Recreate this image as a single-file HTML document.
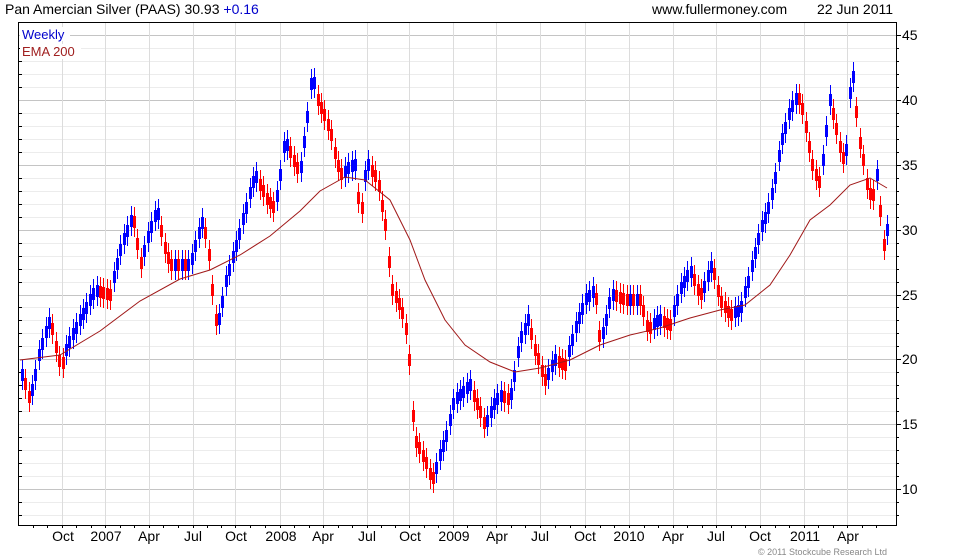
<!DOCTYPE html>
<html><head><meta charset="utf-8">
<style>
html,body{margin:0;padding:0;background:#fff;}
svg{display:block;font-family:"Liberation Sans",sans-serif;}
</style></head>
<body>
<svg width="980" height="560" xmlns="http://www.w3.org/2000/svg">
<rect width="980" height="560" fill="#fff"/>
<g stroke="#ececec" stroke-width="1">
<path d="M19 48.5H896M19 61.5H896M19 74.5H896M19 87.5H896M19 113.5H896M19 126.5H896M19 139.5H896M19 152.5H896M19 178.5H896M19 191.5H896M19 204.5H896M19 217.5H896M19 243.5H896M19 256.5H896M19 269.5H896M19 282.5H896M19 307.5H896M19 320.5H896M19 333.5H896M19 346.5H896M19 372.5H896M19 385.5H896M19 398.5H896M19 411.5H896M19 437.5H896M19 450.5H896M19 463.5H896M19 476.5H896M19 502.5H896M19 515.5H896"/>
</g>
<g stroke="#c4c4c4" stroke-width="1">
<path d="M19 35.5H896M19 100.5H896M19 165.5H896M19 230.5H896M19 295.5H896M19 359.5H896M19 424.5H896M19 489.5H896"/>
</g>
<g stroke="#dcdcdc" stroke-width="1">
<path d="M62.5 23V525M105.5 23V525M149.5 23V525M193.5 23V525M235.5 23V525M280.5 23V525M323.5 23V525M367.5 23V525M409.5 23V525M453.5 23V525M496.5 23V525M540.5 23V525M585.5 23V525M629.5 23V525M673.5 23V525M716.5 23V525M760.5 23V525M804.5 23V525M847.5 23V525"/>
</g>
<g stroke="#000" stroke-width="1">
<path d="M896 35.5h5M896 100.5h5M896 165.5h5M896 230.5h5M896 295.5h5M896 359.5h5M896 424.5h5M896 489.5h5M896 48.5h3M896 61.5h3M896 74.5h3M896 87.5h3M896 113.5h3M896 126.5h3M896 139.5h3M896 152.5h3M896 178.5h3M896 191.5h3M896 204.5h3M896 217.5h3M896 243.5h3M896 256.5h3M896 269.5h3M896 282.5h3M896 307.5h3M896 320.5h3M896 333.5h3M896 346.5h3M896 372.5h3M896 385.5h3M896 398.5h3M896 411.5h3M896 437.5h3M896 450.5h3M896 463.5h3M896 476.5h3M896 502.5h3M896 515.5h3"/>
<path d="M19 48.5h3M19 61.5h3M19 74.5h3M19 87.5h3M19 113.5h3M19 126.5h3M19 139.5h3M19 152.5h3M19 178.5h3M19 191.5h3M19 204.5h3M19 217.5h3M19 243.5h3M19 256.5h3M19 269.5h3M19 282.5h3M19 307.5h3M19 320.5h3M19 333.5h3M19 346.5h3M19 372.5h3M19 385.5h3M19 398.5h3M19 411.5h3M19 437.5h3M19 450.5h3M19 463.5h3M19 476.5h3M19 502.5h3M19 515.5h3"/>
<path d="M33.5 525v3M47.5 525v3M62.5 525v3M76.5 525v3M91.5 525v3M105.5 525v3M120.5 525v3M134.5 525v3M149.5 525v3M163.5 525v3M178.5 525v3M193.5 525v3M207.5 525v3M221.5 525v3M235.5 525v3M250.5 525v3M265.5 525v3M280.5 525v3M294.5 525v3M309.5 525v3M323.5 525v3M338.5 525v3M352.5 525v3M367.5 525v3M381.5 525v3M395.5 525v3M409.5 525v3M424.5 525v3M438.5 525v3M453.5 525v3M467.5 525v3M482.5 525v3M496.5 525v3M511.5 525v3M525.5 525v3M540.5 525v3M555.5 525v3M570.5 525v3M585.5 525v3M600.5 525v3M614.5 525v3M629.5 525v3M644.5 525v3M658.5 525v3M673.5 525v3M687.5 525v3M702.5 525v3M716.5 525v3M731.5 525v3M745.5 525v3M760.5 525v3M775.5 525v3M789.5 525v3M804.5 525v3M818.5 525v3M833.5 525v3M847.5 525v3M862.5 525v3M876.5 525v3"/>
</g>

<g stroke="#0000ff" fill="none">
<path stroke-width="1" transform="translate(0,-9)" d="M22.5 369v30M32.5 384v30M35.5 369v30M39.5 349v30M42.5 338v30M46.5 326v30M49.5 317v30M66.5 344v30M69.5 336v30M73.5 328v30M76.5 322v30M80.5 314v30M83.5 308v30M86.5 302v30M90.5 294v30M93.5 288v30M97.5 285v30M114.5 271v30M117.5 258v30M120.5 244v30M124.5 233v30M127.5 225v30M131.5 215v30M144.5 245v30M148.5 231v30M151.5 221v30M155.5 210v30M158.5 208v30M175.5 259v30M182.5 259v30M188.5 259v30M192.5 253v30M195.5 240v30M199.5 227v30M202.5 217v30M219.5 313v30M222.5 296v30M226.5 275v30M229.5 264v30M233.5 251v30M236.5 240v30M239.5 228v30M243.5 213v30M246.5 202v30M250.5 187v30M253.5 176v30M256.5 171v30M277.5 190v30M280.5 169v30M284.5 141v30M287.5 139v30M301.5 161v30M304.5 136v30M307.5 111v30M311.5 78v30M314.5 77v30M345.5 166v30M348.5 162v30M352.5 160v30M355.5 159v30M365.5 170v30M368.5 159v30M436.5 462v30M440.5 449v30M443.5 440v30M446.5 430v30M450.5 414v30M453.5 398v30M457.5 392v30M460.5 389v30M463.5 386v30M467.5 382v30M470.5 379v30M487.5 415v30M491.5 406v30M494.5 398v30M497.5 393v30M501.5 390v30M511.5 388v30M514.5 370v30M518.5 346v30M521.5 331v30M525.5 323v30M528.5 314v30M548.5 368v30M552.5 360v30M555.5 354v30M569.5 345v30M572.5 334v30M576.5 321v30M579.5 312v30M582.5 303v30M586.5 293v30M589.5 290v30M593.5 286v30M603.5 327v30M606.5 314v30M609.5 297v30M613.5 289v30M630.5 294v30M637.5 294v30M654.5 318v30M657.5 315v30M660.5 314v30M674.5 305v30M677.5 294v30M681.5 282v30M684.5 276v30M687.5 270v30M691.5 266v30M704.5 281v30M708.5 270v30M711.5 261v30M735.5 306v30M738.5 305v30M741.5 301v30M745.5 286v30M748.5 276v30M752.5 260v30M755.5 247v30M758.5 233v30M762.5 220v30M765.5 212v30M768.5 202v30M772.5 188v30M775.5 172v30M779.5 150v30M782.5 133v30M785.5 122v30M789.5 108v30M792.5 100v30M796.5 93v30M823.5 154v30M826.5 125v30M830.5 94v30M846.5 144v30M850.5 87v30M853.5 71v30M877.5 169v30M887.5 224v30"/>
<path stroke-width="3" d="M22.5 369v12M32.5 384v12M35.5 369v12M39.5 349v12M42.5 338v12M46.5 326v12M49.5 317v12M66.5 344v12M69.5 336v12M73.5 328v12M76.5 322v12M80.5 314v12M83.5 308v12M86.5 302v12M90.5 294v12M93.5 288v12M97.5 285v12M114.5 271v12M117.5 258v12M120.5 244v12M124.5 233v12M127.5 225v12M131.5 215v12M144.5 245v12M148.5 231v12M151.5 221v12M155.5 210v12M158.5 208v12M175.5 259v12M182.5 259v12M188.5 259v12M192.5 253v12M195.5 240v12M199.5 227v12M202.5 217v12M219.5 313v12M222.5 296v12M226.5 275v12M229.5 264v12M233.5 251v12M236.5 240v12M239.5 228v12M243.5 213v12M246.5 202v12M250.5 187v12M253.5 176v12M256.5 171v12M277.5 190v12M280.5 169v12M284.5 141v12M287.5 139v12M301.5 161v12M304.5 136v12M307.5 111v12M311.5 78v12M314.5 77v12M345.5 166v12M348.5 162v12M352.5 160v12M355.5 159v12M365.5 170v12M368.5 159v12M436.5 462v12M440.5 449v12M443.5 440v12M446.5 430v12M450.5 414v12M453.5 398v12M457.5 392v12M460.5 389v12M463.5 386v12M467.5 382v12M470.5 379v12M487.5 415v12M491.5 406v12M494.5 398v12M497.5 393v12M501.5 390v12M511.5 388v12M514.5 370v12M518.5 346v12M521.5 331v12M525.5 323v12M528.5 314v12M548.5 368v12M552.5 360v12M555.5 354v12M569.5 345v12M572.5 334v12M576.5 321v12M579.5 312v12M582.5 303v12M586.5 293v12M589.5 290v12M593.5 286v12M603.5 327v12M606.5 314v12M609.5 297v12M613.5 289v12M630.5 294v12M637.5 294v12M654.5 318v12M657.5 315v12M660.5 314v12M674.5 305v12M677.5 294v12M681.5 282v12M684.5 276v12M687.5 270v12M691.5 266v12M704.5 281v12M708.5 270v12M711.5 261v12M735.5 306v12M738.5 305v12M741.5 301v12M745.5 286v12M748.5 276v12M752.5 260v12M755.5 247v12M758.5 233v12M762.5 220v12M765.5 212v12M768.5 202v12M772.5 188v12M775.5 172v12M779.5 150v12M782.5 133v12M785.5 122v12M789.5 108v12M792.5 100v12M796.5 93v12M823.5 154v12M826.5 125v12M830.5 94v12M846.5 144v12M850.5 87v12M853.5 71v12M877.5 169v12M887.5 224v12"/>
</g>
<g stroke="#ff0000" fill="none">
<path stroke-width="1" transform="translate(0,-9)" d="M25.5 378v30M29.5 391v30M52.5 323v30M56.5 341v30M59.5 355v30M63.5 357v30M100.5 286v30M103.5 287v30M107.5 288v30M110.5 289v30M134.5 216v30M137.5 238v30M141.5 257v30M161.5 225v30M165.5 242v30M168.5 252v30M171.5 259v30M178.5 259v30M185.5 259v30M205.5 227v30M209.5 249v30M212.5 284v30M216.5 314v30M260.5 179v30M263.5 185v30M267.5 193v30M270.5 197v30M273.5 201v30M290.5 146v30M294.5 155v30M297.5 162v30M318.5 94v30M321.5 102v30M324.5 109v30M328.5 119v30M331.5 129v30M335.5 147v30M338.5 160v30M341.5 168v30M358.5 192v30M362.5 202v30M372.5 165v30M375.5 170v30M379.5 180v30M382.5 200v30M385.5 219v30M389.5 256v30M392.5 284v30M396.5 291v30M399.5 298v30M402.5 307v30M406.5 323v30M409.5 354v30M413.5 410v30M416.5 436v30M419.5 442v30M423.5 450v30M426.5 457v30M430.5 468v30M433.5 472v30M474.5 390v30M477.5 398v30M480.5 406v30M484.5 417v30M504.5 391v30M508.5 393v30M531.5 328v30M535.5 344v30M538.5 353v30M542.5 365v30M545.5 374v30M559.5 356v30M562.5 358v30M565.5 359v30M596.5 293v30M599.5 330v30M616.5 290v30M620.5 292v30M623.5 293v30M627.5 294v30M633.5 294v30M640.5 294v30M643.5 305v30M647.5 320v30M650.5 322v30M664.5 316v30M667.5 318v30M670.5 319v30M694.5 274v30M698.5 284v30M701.5 288v30M714.5 268v30M718.5 285v30M721.5 296v30M725.5 301v30M728.5 306v30M731.5 309v30M799.5 93v30M802.5 103v30M806.5 121v30M809.5 141v30M812.5 159v30M816.5 169v30M819.5 176v30M833.5 108v30M836.5 123v30M840.5 141v30M843.5 152v30M856.5 106v30M860.5 137v30M863.5 154v30M867.5 178v30M870.5 188v30M873.5 189v30M880.5 205v30M884.5 239v30"/>
<path stroke-width="3" d="M25.5 378v12M29.5 391v12M52.5 323v12M56.5 341v12M59.5 355v12M63.5 357v12M100.5 286v12M103.5 287v12M107.5 288v12M110.5 289v12M134.5 216v12M137.5 238v12M141.5 257v12M161.5 225v12M165.5 242v12M168.5 252v12M171.5 259v12M178.5 259v12M185.5 259v12M205.5 227v12M209.5 249v12M212.5 284v12M216.5 314v12M260.5 179v12M263.5 185v12M267.5 193v12M270.5 197v12M273.5 201v12M290.5 146v12M294.5 155v12M297.5 162v12M318.5 94v12M321.5 102v12M324.5 109v12M328.5 119v12M331.5 129v12M335.5 147v12M338.5 160v12M341.5 168v12M358.5 192v12M362.5 202v12M372.5 165v12M375.5 170v12M379.5 180v12M382.5 200v12M385.5 219v12M389.5 256v12M392.5 284v12M396.5 291v12M399.5 298v12M402.5 307v12M406.5 323v12M409.5 354v12M413.5 410v12M416.5 436v12M419.5 442v12M423.5 450v12M426.5 457v12M430.5 468v12M433.5 472v12M474.5 390v12M477.5 398v12M480.5 406v12M484.5 417v12M504.5 391v12M508.5 393v12M531.5 328v12M535.5 344v12M538.5 353v12M542.5 365v12M545.5 374v12M559.5 356v12M562.5 358v12M565.5 359v12M596.5 293v12M599.5 330v12M616.5 290v12M620.5 292v12M623.5 293v12M627.5 294v12M633.5 294v12M640.5 294v12M643.5 305v12M647.5 320v12M650.5 322v12M664.5 316v12M667.5 318v12M670.5 319v12M694.5 274v12M698.5 284v12M701.5 288v12M714.5 268v12M718.5 285v12M721.5 296v12M725.5 301v12M728.5 306v12M731.5 309v12M799.5 93v12M802.5 103v12M806.5 121v12M809.5 141v12M812.5 159v12M816.5 169v12M819.5 176v12M833.5 108v12M836.5 123v12M840.5 141v12M843.5 152v12M856.5 106v12M860.5 137v12M863.5 154v12M867.5 178v12M870.5 188v12M873.5 189v12M880.5 205v12M884.5 239v12"/>
</g>

<polyline fill="none" stroke="#a01818" stroke-width="1" points="20,360 60,355 100,331 140,301 180,279 210,270 240,255 270,236 300,211 320,191 345,177 365,180 390,200 410,240 425,280 445,320 465,345 490,362 515,372 540,368 570,360 600,345 630,335 660,328 690,318 720,310 745,305 770,285 790,255 810,220 830,205 850,185 870,178 887,188"/>
<rect x="18.5" y="22.5" width="878" height="503" fill="none" stroke="#000" stroke-width="1"/>
<rect x="20" y="27" width="50" height="14" fill="#fff"/>
<rect x="20" y="44" width="61" height="15" fill="#fff"/>
<text x="22" y="39" font-size="13" fill="#0000cc">Weekly</text>
<text x="22" y="56" font-size="13" fill="#a02020">EMA 200</text>
<text x="5" y="14" font-size="14" fill="#000">Pan Amercian Silver (PAAS) 30.93 <tspan fill="#0000cc">+0.16</tspan></text>
<text x="652" y="14" font-size="14" fill="#000">www.fullermoney.com</text>
<text x="817" y="14" font-size="14" fill="#000">22 Jun 2011</text>
<g font-size="14" fill="#000">
<text x="902" y="40">45</text><text x="902" y="105">40</text><text x="902" y="170">35</text><text x="902" y="235">30</text><text x="902" y="300">25</text><text x="902" y="364">20</text><text x="902" y="429">15</text><text x="902" y="494">10</text>
</g>
<g font-size="14" fill="#000" text-anchor="middle">
<text x="63" y="541">Oct</text><text x="106" y="541">2007</text><text x="149" y="541">Apr</text><text x="193" y="541">Jul</text><text x="236" y="541">Oct</text><text x="281" y="541">2008</text><text x="323" y="541">Apr</text><text x="367" y="541">Jul</text><text x="410" y="541">Oct</text><text x="454" y="541">2009</text><text x="497" y="541">Apr</text><text x="540" y="541">Jul</text><text x="585" y="541">Oct</text><text x="629" y="541">2010</text><text x="673" y="541">Apr</text><text x="716" y="541">Jul</text><text x="760" y="541">Oct</text><text x="805" y="541">2011</text><text x="848" y="541">Apr</text>
</g>
<text x="758" y="555" font-size="9" fill="#888">© 2011 Stockcube Research Ltd</text>
</svg>
</body></html>
